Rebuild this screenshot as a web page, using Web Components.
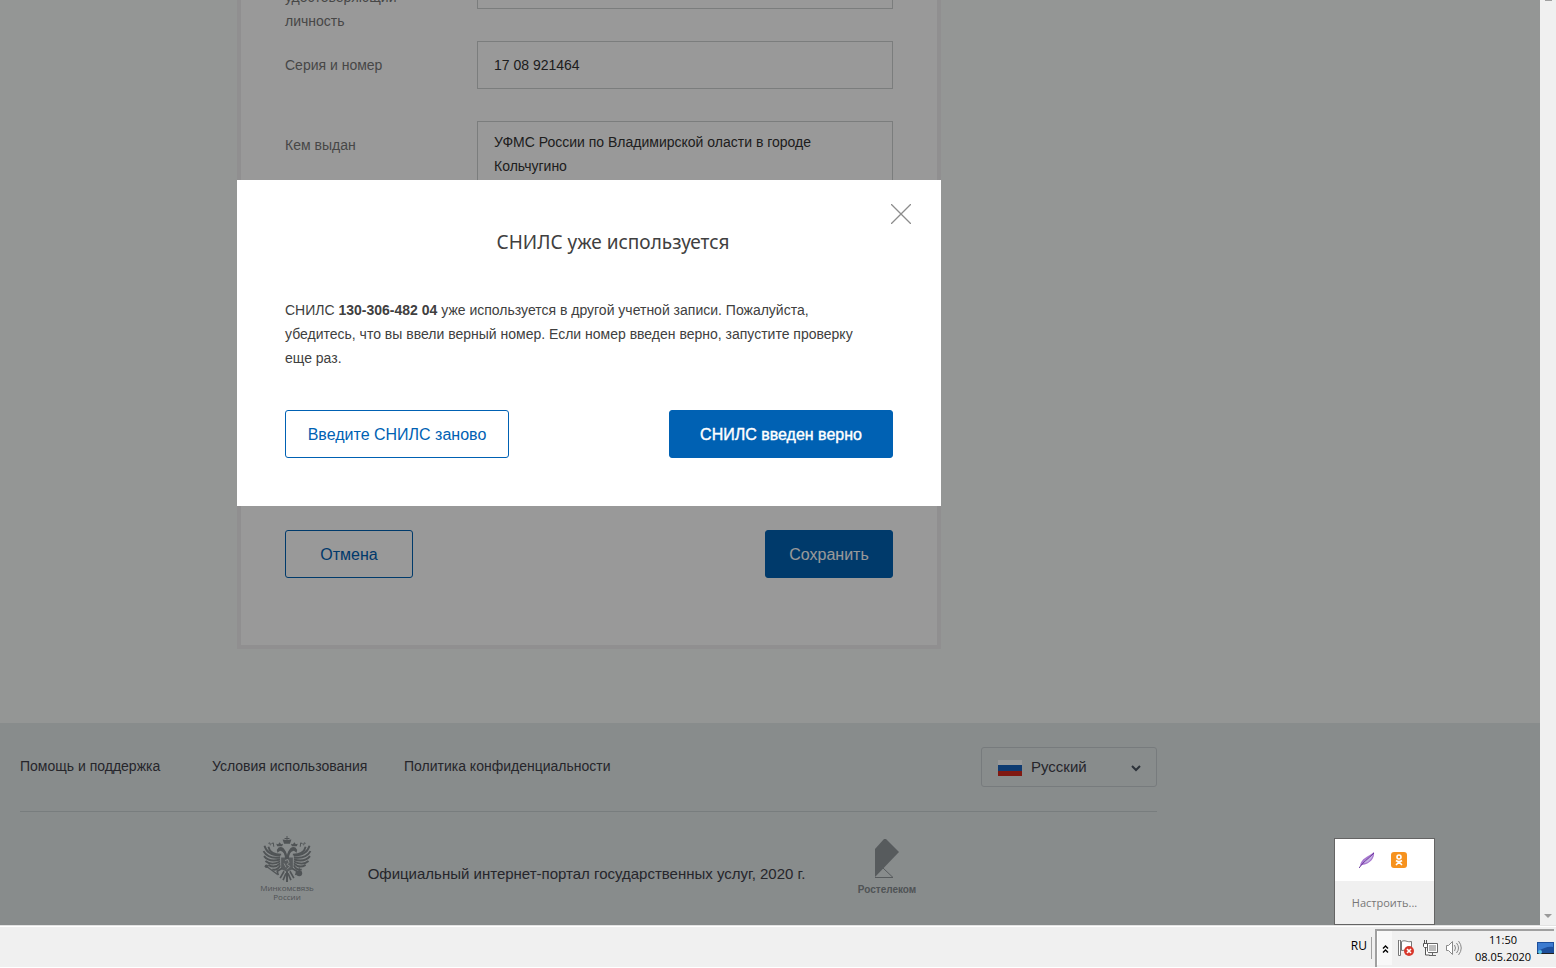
<!DOCTYPE html>
<html lang="ru">
<head>
<meta charset="utf-8">
<title>СНИЛС уже используется</title>
<style>
  body {
    margin: 0;
    font-family: "Liberation Sans", Arial, sans-serif;
    font-size: 14px;
    line-height: 24px;
    color: #404040;
    --blue: #0061b3;
    --system-font: "Open Sans", "Segoe UI", sans-serif;
  }
  p {
    max-width: 592px;
    margin: 0;
  }
</style>
</head>
<body>
<desktop-screen>
  <page-view>
    <profile-form></profile-form>
    <site-footer></site-footer>
    <modal-dialog slot="overlay" heading="СНИЛС уже используется">
      <p>СНИЛС <b>130-306-482 04</b> уже используется в другой учетной записи. Пожалуйста, убедитесь, что вы ввели верный номер. Если номер введен верно, запустите проверку еще раз.</p>
      <ui-button slot="actions" size="wide">Введите СНИЛС заново</ui-button>
      <ui-button slot="actions" size="wide" kind="primary" strong>СНИЛС введен верно</ui-button>
    </modal-dialog>
  </page-view>
  <tray-popup slot="popup"></tray-popup>
  <task-bar slot="taskbar"></task-bar>
</desktop-screen>

<script>
(function () {
  function define(name, markup, setup) {
    const template = document.createElement("template");
    template.innerHTML = markup;

    customElements.define(
      name,
      class extends HTMLElement {
        constructor() {
          super();
          const shadow = this.attachShadow({ mode: "open" });
          shadow.appendChild(template.content.cloneNode(true));
          if (setup) {
            setup(this, shadow);
          }
        }
      }
    );
  }

  define(
    "desktop-screen",
    `
    <style>
      :host {
        display: flex;
        flex-direction: column;
        height: 100vh;
        overflow: hidden;
      }
      .view {
        position: relative;
        display: flex;
        flex: 1;
        min-height: 0;
      }
      ::slotted(page-view) {
        flex: 1;
        min-width: 0;
      }
      .scrollbar {
        display: flex;
        flex-direction: column;
        justify-content: space-between;
        align-items: center;
        width: 16px;
        background: #f0f0f0;
      }
      .scrollbar i {
        width: 7px;
        height: 1px;
        background: #a0a0a0;
      }
      .scrollbar svg {
        margin-bottom: 7px;
      }
      .popup {
        position: absolute;
        right: 121px;
        bottom: 0;
      }
    </style>
    <div class="view">
      <slot></slot>
      <div class="scrollbar">
        <i></i>
        <svg width="8" height="4" viewBox="0 0 8 4"><path d="M0 0h8L4 4z" fill="#9a9a9a"/></svg>
      </div>
      <div class="popup"><slot name="popup"></slot></div>
    </div>
    <slot name="taskbar"></slot>
    `
  );

  // The page is scrolled to its end, so the content hangs from the bottom edge
  define(
    "page-view",
    `
    <style>
      :host {
        position: relative;
        display: flex;
        flex-direction: column;
        justify-content: flex-end;
        overflow: hidden;
        background: #f7faf8;
      }
      .shade {
        position: absolute;
        inset: 0;
        background: rgba(0, 0, 0, 0.4);
      }
      .holder {
        max-width: 1178px;
        padding-top: 180px;
      }
    </style>
    <slot></slot>
    <div class="shade"><div class="holder"><slot name="overlay"></slot></div></div>
    `
  );

  define(
    "ui-button",
    `
    <style>
      :host {
        display: block;
        width: 128px;
      }
      :host([size="wide"]) {
        width: 224px;
      }
      button {
        box-sizing: border-box;
        width: 100%;
        height: 48px;
        padding: 2px 0 0;
        border: 1px solid var(--blue);
        border-radius: 3px;
        background: transparent;
        color: var(--blue);
        font: 16px/24px "Liberation Sans", Arial, sans-serif;
        white-space: nowrap;
        cursor: pointer;
      }
      :host([kind="primary"]) button {
        background: var(--blue);
        color: #fff;
      }
      :host([strong]) button {
        -webkit-text-stroke: 0.4px #fff;
      }
    </style>
    <button type="button"><slot></slot></button>
    `
  );

  define(
    "profile-form",
    `
    <style>
      :host {
        display: block;
        flex: none;
        max-width: 1178px;
        padding-bottom: 74px;
      }
      form {
        box-sizing: border-box;
        max-width: 704px;
        margin: 0 auto;
        padding: 44px 44px 67px;
        border: 4px solid #f0eff0;
        background: #fff;
      }
      .row {
        display: grid;
        grid-template-columns: 192px 1fr;
        align-items: start;
        min-height: 80px;
      }
      label {
        width: 128px;
        padding-top: 12px;
        color: #777;
      }
      .two-lines {
        padding-top: 24px;
      }
      input, select, textarea {
        box-sizing: border-box;
        display: block;
        width: 100%;
        height: 48px;
        margin: 0;
        padding: 0 16px;
        border: 1px solid #cdd0d1;
        border-radius: 0;
        background: transparent;
        color: #333;
        font: inherit;
        appearance: none;
        resize: none;
      }
      textarea {
        height: 96px;
        padding: 8px 16px;
        overflow: hidden;
      }
      .actions {
        display: flex;
        justify-content: space-between;
        margin-top: 313px;
      }
    </style>
    <form>
      <div class="row">
        <label class="two-lines" for="document">удостоверяющий личность</label>
        <select id="document"></select>
      </div>
      <div class="row">
        <label for="number">Серия и номер</label>
        <input id="number" value="17 08 921464">
      </div>
      <div class="row">
        <label for="issuer">Кем выдан</label>
        <textarea id="issuer">УФМС России по Владимирской оласти в городе Кольчугино</textarea>
      </div>
      <div class="actions">
        <ui-button>Отмена</ui-button>
        <ui-button kind="primary">Сохранить</ui-button>
      </div>
    </form>
    `
  );

  define(
    "modal-dialog",
    `
    <style>
      :host {
        display: block;
        box-sizing: border-box;
        max-width: 704px;
        margin: 0 auto;
        padding: 0 48px 48px;
        background: #fff;
      }
      header {
        display: flex;
        justify-content: flex-end;
        height: 46px;
        margin-right: -24px;
      }
      .close {
        width: 32px;
        height: 32px;
        margin-top: 18px;
        padding: 6px;
        border: 0;
        background: none;
        cursor: pointer;
      }
      svg {
        display: block;
      }
      h2 {
        margin: 0 -48px 40px 0;
        font: 19px/32px "Noto Sans", "Open Sans", sans-serif;
        text-align: center;
      }
      .actions {
        display: flex;
        justify-content: space-between;
        margin-top: 40px;
      }
    </style>
    <header>
      <button class="close" type="button" aria-label="Закрыть">
        <svg width="20" height="20" viewBox="0 0 20 20"><path d="M0 0l20 20M20 0L0 20" stroke="#8c8c8c" stroke-width="1.3"/></svg>
      </button>
    </header>
    <h2></h2>
    <slot></slot>
    <div class="actions"><slot name="actions"></slot></div>
    `,
    (host, shadow) => {
      shadow.querySelector("h2").textContent = host.getAttribute("heading");
    }
  );

  define(
    "language-select",
    `
    <style>
      :host {
        position: relative;
        display: block;
        width: 176px;
      }
      select {
        box-sizing: border-box;
        width: 100%;
        height: 40px;
        padding: 0 0 0 49px;
        border: 1px solid #c6cdd0;
        border-radius: 3px;
        background: transparent;
        color: #404048;
        font: 15px/24px "Liberation Sans", Arial, sans-serif;
        appearance: none;
      }
      svg {
        position: absolute;
        pointer-events: none;
      }
      .flag {
        left: 17px;
        top: 13px;
      }
      .arrow {
        right: 16px;
        top: 18px;
      }
    </style>
    <select aria-label="Язык"><option>Русский</option></select>
    <svg class="flag" width="24" height="16" viewBox="0 0 24 16">
      <path d="M0 0h24v5H0z" fill="#fff"/>
      <path d="M0 5h24v6H0z" fill="#1c63bd"/>
      <path d="M0 11h24v5H0z" fill="#d52b1e"/>
    </svg>
    <svg class="arrow" width="10" height="7" viewBox="0 0 10 7"><path d="M1 1l4 4 4-4" fill="none" stroke="#4a5460" stroke-width="2"/></svg>
    `
  );

  define(
    "site-footer",
    `
    <style>
      :host {
        display: block;
        box-sizing: border-box;
        flex: none;
        height: 202px;
        padding: 24px 20px 0;
        background: #e3e9ea;
      }
      .inner {
        max-width: 1137px;
      }
      .top {
        display: flex;
        justify-content: space-between;
        padding-bottom: 24px;
        border-bottom: 1px solid #c9d0d2;
      }
      nav {
        display: flex;
        padding-top: 7px;
      }
      a {
        min-width: 192px;
        color: #404048;
        text-decoration: none;
        white-space: nowrap;
      }
      .bottom {
        display: grid;
        grid-template-columns: 54px 449px 56px;
        column-gap: 48px;
        justify-content: start;
        padding: 24px 0 0 240px;
        color: #858c8f;
      }
      .brand {
        display: flex;
        flex-direction: column;
        align-items: center;
        font-size: 8px;
        line-height: 9px;
        text-align: center;
        white-space: nowrap;
      }
      .ministry {
        font-family: "Open Sans", sans-serif;
      }
      .brand svg {
        flex: none;
      }
      .telecom {
        padding-top: 3px;
        font-size: 10px;
        font-weight: bold;
      }
      .telecom svg {
        margin-bottom: 6px;
      }
      .caption {
        padding-top: 26px;
        color: #404048;
        font-size: 15px;
        text-align: center;
        white-space: nowrap;
      }
    </style>
    <div class="inner">
      <div class="top">
        <nav>
          <a href="#">Помощь и поддержка</a>
          <a href="#">Условия использования</a>
          <a href="#">Политика конфиденциальности</a>
        </nav>
        <language-select></language-select>
      </div>
      <div class="bottom">
        <div class="brand ministry">
          <svg width="50" height="47" viewBox="0 0 50 48">
            <defs>
              <g id="half">
                <g fill="none" stroke="currentColor" stroke-width="1.9">
                  <path d="M18 20C10 20 4 17 2 10"/>
                  <path d="M18 22C10 23 4 21 1 15.500"/>
                  <path d="M18 24C11 26 5 25 1.500 20.500"/>
                  <path d="M18 26C12 29 7 29 3 25.500"/>
                  <path d="M18 28C14 32 10 32 6 29.500"/>
                  <path d="M18 30c-2 4-5 5-8 4"/>
                  <path d="M19 19C12 19 7 16 6 11"/>
                  <path d="M24 21c0-5-2-7-6-8l-3 2"/>
                </g>
                <path d="M16 12c3-2 6 0 7 3l2 5v4h-2c0-5-1-8-5-9l-3 2v-3z"/>
                <path d="M15 10.500L14 8l2 .5 1.500-2L19 8.500l2-.5-1 2.500z"/>
                <path d="M11.500 11l-.5-4-2 1M8 9.500L7.500 7 6 7.500" fill="none" stroke="currentColor"/>
                <path d="M20 33l-5 3 1 4M22 36l-4 7M24 38l-3 7" fill="none" stroke="currentColor" stroke-width="1.700"/>
              </g>
            </defs>
            <g fill="currentColor">
              <use href="#half"/>
              <use href="#half" transform="matrix(-1 0 0 1 50 0)"/>
              <path d="M24.500 0h1v2h2v1h-2v1l4-.5L28 8h-6l-1.500-4.500 4 .5V3h-2V2h2z"/>
              <path d="M25 36v11" stroke="currentColor" stroke-width="2"/>
              <path d="M19 22h12v11c0 2-4 2-6 4-2-2-6-2-6-4z" opacity=".85"/>
              <path d="M23 25l3-1 1 3-2 2 3 2-3 3M22 28l2 4" fill="none" stroke="#e3e9ea"/>
              <path d="M4 31l11 8" stroke="currentColor" stroke-width="1.300"/>
              <circle cx="4" cy="31" r="1.800"/>
              <circle cx="37.500" cy="38" r="3"/>
              <path d="M37 32h1v4h-1z"/>
            </g>
          </svg>
          <span>Минкомсвязь<br>России</span>
        </div>
        <div class="caption">Официальный интернет-портал государственных услуг, 2020 г.</div>
        <div class="brand telecom">
          <svg width="26" height="40" viewBox="0 0 26 40">
            <path d="M1 10L10 0h2l13 13L1 38z" fill="#91989b"/>
            <path d="M1 38.500h18L9 29" fill="none" stroke="#91989b"/>
          </svg>
          <span>Ростелеком</span>
        </div>
      </div>
    </div>
    `
  );

  define(
    "tray-popup",
    `
    <style>
      :host {
        display: block;
        box-sizing: border-box;
        width: 101px;
        border: 1px solid #646464;
        background: #f0f0f0;
        font: 11px/43px var(--system-font);
        text-align: center;
      }
      .icons {
        display: flex;
        justify-content: center;
        align-items: center;
        gap: 16px;
        height: 42px;
        padding-right: 3px;
        background: #fff;
      }
      a {
        display: block;
        color: #777;
        text-decoration: none;
      }
    </style>
    <div class="icons">
      <svg width="16" height="16" viewBox="0 0 16 16">
        <path d="M1 14C2 6 9 5 15 0c1 6-4 12-12 13z" fill="#a877cf"/>
        <path d="M4 11c2-4 6-5 10-9-1 5-4 8-8 9z" fill="#c7b4e4"/>
        <path d="M0 16C4 10 9 7 15 1" fill="none" stroke="#68349b"/>
      </svg>
      <svg width="16" height="16" viewBox="0 0 16 16">
        <rect width="16" height="16" rx="3" fill="#f6921e"/>
        <g fill="none" stroke="#fff" stroke-width="1.6">
          <circle cx="8" cy="5" r="2"/>
          <path d="M5 8.500c2 1.500 4 1.500 6 0M8 10l-3 3M8 10l3 3"/>
        </g>
      </svg>
    </div>
    <a href="#">Настроить...</a>
    `
  );

  define(
    "task-bar",
    `
    <style>
      :host {
        display: flex;
        justify-content: flex-end;
        box-sizing: border-box;
        flex: none;
        height: 43px;
        padding: 2px 2px 0 0;
        border-top: 1px solid #e3e3e3;
        border-bottom: 1px solid #fff;
        background: #f0f0f0;
        box-shadow: inset 0 1px #fff;
        color: #000;
        font: 12px/17px var(--system-font);
      }
      .lang {
        align-self: center;
        height: 22px;
        margin-right: 3px;
        padding-right: 4px;
        border-right: 1px solid #a0a0a0;
      }
      .tray {
        display: flex;
        align-items: center;
        margin-top: 1px;
        padding-bottom: 2px;
        border-top: 2px solid #a0a0a0;
        border-left: 2px solid #a0a0a0;
      }
      .expand {
        align-self: stretch;
        width: 15px;
        margin-right: 6px;
        padding: 0 0 0 1px;
        border: 0;
        border-left: 1px solid #fff;
        background: #f8f8f8;
      }
      .icons {
        display: flex;
        gap: 8px;
      }
      time {
        width: 56px;
        margin: 0 6px 0 13px;
        font-size: 11px;
        text-align: center;
      }
    </style>
    <span class="lang">RU</span>
    <div class="tray">
      <button class="expand" type="button" aria-label="Скрытые значки">
        <svg width="7" height="8" viewBox="0 0 7 8"><path d="M1 3.500L3.500 1 6 3.500M1 7.500L3.500 5 6 7.500" fill="none" stroke="#000" stroke-width="1.4"/></svg>
      </button>
      <div class="icons">
        <svg width="16" height="16" viewBox="0 0 16 16">
          <path d="M3.500 1.500c4-2 5 1 10 0v9c-5 1-6-1-10 0z" fill="#fff" stroke="#777"/>
          <path d="M.5 0h2v15.500h-2z" fill="#fff" stroke="#777"/>
          <circle cx="11" cy="11" r="5" fill="#d8382c"/>
          <path d="M9 9l4 4M13 9l-4 4" stroke="#fff" stroke-width="1.600"/>
        </svg>
        <svg width="16" height="16" viewBox="0 0 16 16">
          <path d="M5.500 3.500h10v9h-10zM7 15.500h7M10.500 13v2" fill="#fff" stroke="#666"/>
          <path d="M7 5h7v6H7z" fill="#bbb"/>
          <path d="M1.500 3.500h4v3l-1 1h-2l-1-1zM2.500 3V0M4.500 3V0M3.500 8v7h4" fill="#fff" stroke="#555"/>
        </svg>
        <svg width="16" height="16" viewBox="0 0 16 16">
          <path d="M.5 5.500h2l4-4v13l-4-4h-2z" fill="#fff" stroke="#888"/>
          <path d="M8.500 5q2 3 0 6M10.500 3q4 5 0 10M12.500 1q5.500 7 0 14" fill="none" stroke="#888"/>
        </svg>
      </div>
      <time>11:50<br>08.05.2020</time>
      <svg width="17" height="14" viewBox="0 0 17 14">
        <path d="M0 1h17v11H0z" fill="#1d4f9c"/>
        <path d="M1 2h15v4C11 5 7 7 1 10z" fill="#3c7bd0"/>
        <path d="M0 12h17v1H0z" fill="#222"/>
        <circle cx="3" cy="11" r="2" fill="#59c3e8"/>
      </svg>
    </div>
    `
  );
})();
</script>
</body>
</html>
